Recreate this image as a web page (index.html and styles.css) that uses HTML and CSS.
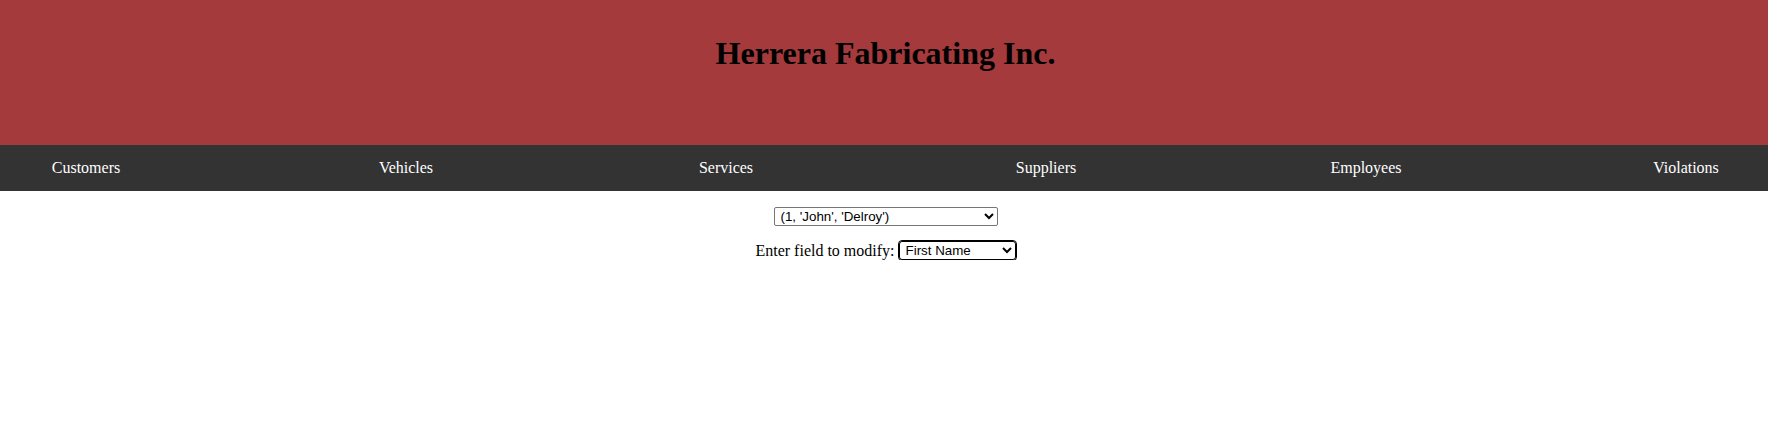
FILE: index.html
```html
<!DOCTYPE html>
<html lang="en">
<head>
<meta charset="utf-8">
<title>Herrera Fabricating Inc.</title>
<link rel="stylesheet" href="styles.css">
</head>
<body>
<header class="banner">
  <h1 class="banner-title">Herrera Fabricating Inc.</h1>
</header>
<nav class="topnav">
  <a class="topnav-link" href="#">Customers</a>
  <a class="topnav-link" href="#">Vehicles</a>
  <a class="topnav-link" href="#">Services</a>
  <a class="topnav-link" href="#">Suppliers</a>
  <a class="topnav-link" href="#">Employees</a>
  <a class="topnav-link" href="#">Violations</a>
</nav>
<main class="content">
  <div class="row row-record">
    <select class="field field-record">
      <option>(1, 'John', 'Delroy')</option>
    </select>
  </div>
  <p class="row row-modify">
    <span class="label">Enter field to modify:</span>
    <select class="field field-name">
      <option>First Name</option>
    </select>
  </p>
</main>
</body>
</html>
```

FILE: styles.css
```css
html, body {
  margin: 0;
  padding: 0;
  background: #ffffff;
  font-family: "Liberation Serif", "Times New Roman", serif;
  font-size: 16px;
  color: #000;
}

.banner {
  background: #a43a3b;
  height: 145px;
  box-sizing: border-box;
  padding-top: 14px;
  text-align: center;
}

.banner-title {
  margin: 21px 0 0 3px;
  font-size: 32px;
  font-weight: bold;
  line-height: 37px;
}

.topnav {
  background: #333333;
  height: 46px;
  box-sizing: border-box;
  display: flex;
  justify-content: space-between;
  align-items: center;
  padding: 0 2px 0 6px;
}

.topnav-link {
  width: 160px;
  text-align: center;
  color: #ffffff;
  text-decoration: none;
  font-size: 16px;
  line-height: 18px;
}

.content {
  display: flex;
  flex-direction: column;
  align-items: center;
  padding-top: 16px;
  padding-left: 3px;
}

.row {
  margin: 0;
}

.row-modify {
  margin-top: 14px;
  display: flex;
  align-items: center;
  gap: 4px;
}

.label {
  line-height: 19px;
  padding-top: 1px;
}

.field {
  font-family: "Liberation Sans", Arial, sans-serif;
  font-size: 13.33px;
  color: #000;
  height: 19px;
  box-sizing: border-box;
  background-color: #fff;
  border: 1px solid #767676;
  border-radius: 2px;
  padding: 0 0 0 2px;
}

.field-record {
  width: 224px;
}

.field-name {
  width: 117px;
  border-color: #000;
  outline: 1px solid #000;
  border-radius: 3px;
}
```
